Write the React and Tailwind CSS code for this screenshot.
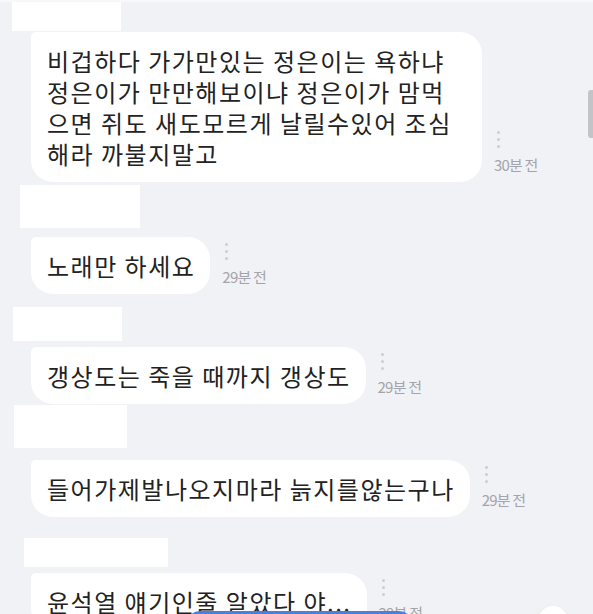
import React from 'react'

const font = { fontFamily: '"Noto Sans CJK KR", "Noto Sans", sans-serif' }

const messages = [
  {
    nameCls: 'ml-[12px] w-[109px] h-[29px]',
    bubbleCls: 'mt-[1px]',
    lines: ['비겁하다 가가만있는 정은이는 욕하냐', '정은이가 만만해보이냐 정은이가 맘먹', '으면 쥐도 새도모르게 날릴수있어 조심', '해라 까불지말고'],
    time: '30분 전',
    bubbleWidth: 'w-[451px]',
  },
  {
    nameCls: 'mt-[3px] ml-[20px] w-[120px] h-[43px]',
    bubbleCls: 'mt-[9px]',
    lines: ['노래만 하세요'],
    time: '29분 전',
  },
  {
    nameCls: 'mt-[13px] ml-[13px] w-[109px] h-[34px]',
    bubbleCls: 'mt-[6px]',
    lines: ['갱상도는 죽을 때까지 갱상도'],
    time: '29분 전',
  },
  {
    nameCls: 'mt-[1px] ml-[14px] w-[113px] h-[43px]',
    bubbleCls: 'mt-[12px]',
    lines: ['들어가제발나오지마라 늙지를않는구나'],
    time: '29분 전',
  },
  {
    nameCls: 'mt-[21px] ml-[24px] w-[144px] h-[29px]',
    bubbleCls: 'mt-[6px]',
    lines: ['윤석열 얘기인줄 알았다 야...'],
    time: '29분 전',
  },
]

function MoreDots() {
  return (
    <div className="ml-[3px] flex flex-col gap-[4px]">
      <span className="block w-[3px] h-[3px] rounded-full bg-[#cdced2]" />
      <span className="block w-[3px] h-[3px] rounded-full bg-[#cdced2]" />
      <span className="block w-[3px] h-[3px] rounded-full bg-[#cdced2]" />
    </div>
  )
}

function Message({ msg }) {
  return (
    <div>
      <div className={`bg-white ${msg.nameCls}`} />
      <div className={`flex items-end ml-[31px] ${msg.bubbleCls}`}>
        <div
          className={`bg-white rounded-[22px] rounded-tl-[5px] pl-4 pr-[15px] py-[13px] text-[24px] leading-[31px] tracking-[1.5px] text-[#222] whitespace-nowrap ${msg.bubbleWidth || ''}`}
        >
          {msg.lines.map((l, i) => (
            <div key={i}>{l}</div>
          ))}
        </div>
        <div className="ml-3 mb-[9px] flex flex-col">
          <MoreDots />
          <span className="mt-[9px] text-[15px] leading-[16px] text-[#a3a4a9] tracking-[-0.8px]">{msg.time}</span>
        </div>
      </div>
    </div>
  )
}

export default function App() {
  return (
    <div className="relative w-[593px] h-[614px] overflow-hidden bg-[#f1f2f6]" style={font}>
      <div className="h-[2px] bg-[#f8f8fa]" />
      {messages.map((m, i) => (
        <Message key={i} msg={m} />
      ))}

      {/* scrollbar thumb */}
      <div className="absolute left-[588px] top-[90px] w-[6px] h-[48px] rounded-l-[3px] bg-[#c3c4c8]" />

      {/* floating bottom controls */}
      <div className="absolute left-[186px] top-[611px] w-[227px] h-[30px] rounded-t-[14px] bg-[#4a7fe2]" />
      <div className="absolute left-[538px] top-[606px] w-[30px] h-[30px] rounded-full bg-white shadow-sm" />
    </div>
  )
}
